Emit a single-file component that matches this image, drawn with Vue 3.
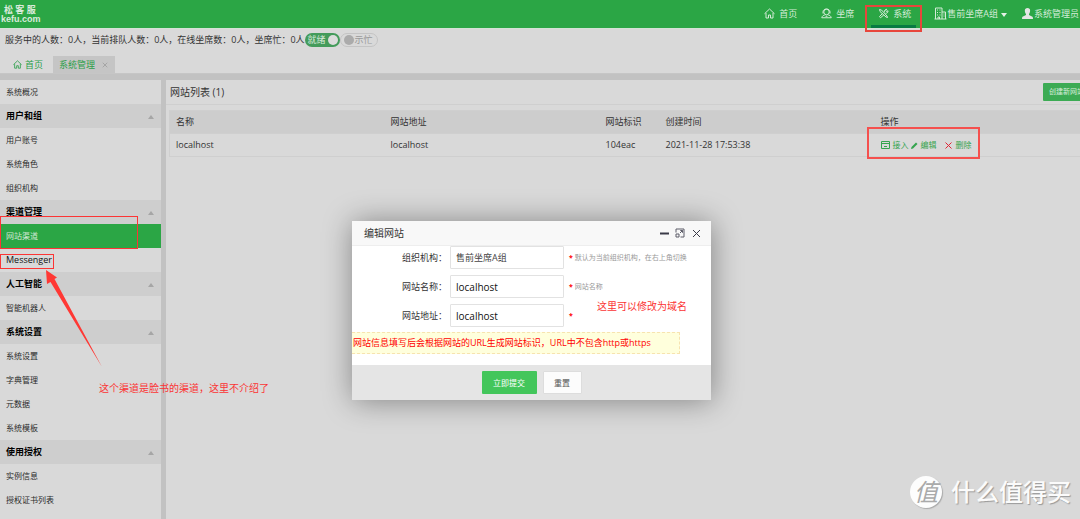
<script setup>
import { ref } from 'vue'

const groups = [
  { title: '', items: ['系统概况'] },
  { title: '用户和组', items: ['用户账号', '系统角色', '组织机构'] },
  { title: '渠道管理', items: ['网站渠道', 'Messenger'] },
  { title: '人工智能', items: ['智能机器人'] },
  { title: '系统设置', items: ['系统设置', '字典管理', '元数据', '系统模板'] },
  { title: '使用授权', items: ['实例信息', '授权证书列表'] }
]
const active = ref('网站渠道')
const org = ref('售前坐席A组')
const name = ref('localhost')
const url = ref('localhost')
</script>

<template>
  <div class="page">
    <header class="top">
      <a class="logo" href="#"><span class="logo-cn">松 客 服</span><span class="logo-en">kefu.com</span></a>
      <nav class="nav">
        <a href="#" class="nav-item">
          <svg class="ico" viewBox="0 0 22 22"><path d="M1 11.500 11 2l10 9.500M4 10v10h5v-6h4v6h5V10" /></svg>
          <span>首页</span>
        </a>
        <a href="#" class="nav-item">
          <svg class="ico" viewBox="0 0 22 22"><circle cx="11" cy="8" r="5.500" /><path d="M4 11V7.500C4.500 0 17.500 0 18 7.500V11M1.500 19.500c1-4 3.500-5 6-5.500M20.500 19.500c-1-4-3.500-5-6-5.500M1.500 19.500h19M9 16.500h4" /></svg>
          <span>坐席</span>
        </a>
        <a href="#" class="nav-item current">
          <svg class="ico" viewBox="0 0 22 22"><path d="m3 3 4 1 11 12 1 3-3-1L4 7zM13 8.500c-1-3 1-6 4.500-6L15.500 5l1.500 2 3-1.500c.5 3.500-2.500 5.500-5 5M9 11l-6 6 2 2.500L11.500 14" /></svg>
          <span>系统</span>
        </a>
        <a href="#" class="nav-org">
          <svg class="ico-org" viewBox="0 0 26 26"><path d="M3 24V2h13v22M16 10h7v14M1 24h24M6 6h2M11 6h2M6 11h2M11 11h2M6 16h2M11 16h2M8 24v-4h3v4M19 14h2M19 18h2" /></svg>
          <span>售前坐席A组</span>
          <i class="caret"></i>
        </a>
        <a href="#" class="nav-user">
          <svg class="ico-user" viewBox="0 0 22 22"><path d="M11 0c7 0 6 8 3 12v2l7 3.500q1 1 1 4.500H0q0-3.500 1-4.500L8 14v-2C5 8 4 0 11 0z" /></svg>
          <span>系统管理员</span>
        </a>
      </nav>
    </header>

    <div class="status">
      <span>服务中的人数：0人，当前排队人数：0人，在线坐席数：0人，坐席忙：0人</span>
      <button class="pill on" type="button">就绪<i class="dot"></i></button>
      <button class="pill off" type="button"><i class="dot"></i>示忙</button>
    </div>

    <div class="tabs">
      <a href="#" class="tab">
        <svg class="ico" viewBox="0 0 22 22"><path d="M1 11.500 11 2l10 9.500M4 10v10h5v-6h4v6h5V10" /></svg>首页
      </a>
      <a href="#" class="tab open">系统管理
        <svg class="tab-x" viewBox="0 0 8 8"><path d="m1 1 6 6M7 1 1 7" /></svg>
      </a>
    </div>

    <div class="body">
      <nav class="side">
        <template v-for="g in groups" :key="g.title">
          <button v-if="g.title" class="group" type="button">{{ g.title }}<i class="up"></i></button>
          <a v-for="i in g.items" :key="i" href="#" class="item" :class="{ active: i === active, plain: i === 'Messenger' }" @click.prevent="active = i">{{ i }}</a>
        </template>
      </nav>

      <main class="main">
        <div class="head">
          <h1>网站列表 (1)</h1>
          <button class="create" type="button">创建新网站</button>
        </div>
        <div class="table-wrap">
          <table>
            <colgroup><col class="c-wide"><col class="c-wide"><col class="c-id"><col class="c-wide"><col></colgroup>
            <thead>
              <tr><th>名称</th><th>网站地址</th><th>网站标识</th><th>创建时间</th><th>操作</th></tr>
            </thead>
            <tbody>
              <tr>
                <td>localhost</td><td>localhost</td><td>104eac</td><td>2021-11-28 17:53:38</td>
                <td>
                  <div class="ops">
                    <a href="#"><svg class="op-win" viewBox="0 0 9 8"><path d="M.5.5h8v7h-8zM0 2.500h9M3 5.500h3" /></svg>接入</a>
                    <a href="#"><svg class="op-pen" viewBox="0 0 14 14"><path d="m0 14 1-4L10 1l3 3-9 9z" /></svg>编辑</a>
                    <a href="#" class="del"><svg class="op-x" viewBox="0 0 14 14"><path d="m1 1 12 12M13 1 1 13" /></svg>删除</a>
                  </div>
                </td>
              </tr>
            </tbody>
          </table>
        </div>
      </main>
    </div>

    <form class="dialog" @submit.prevent>
      <div class="d-head">
        <h2>编辑网站</h2>
        <button type="button" aria-label="最小化"><svg viewBox="0 0 10 10"><path class="thick" d="M1 5.500h9" /></svg></button>
        <button type="button" aria-label="最大化"><svg class="d-max" viewBox="0 0 20 20"><path d="M2 9V2h16v16h-7M2 12h6v6H2zM10 10l5-5M10.500 5H15v4.500" /></svg></button>
        <button type="button" aria-label="关闭"><svg viewBox="0 0 10 10"><path d="m2 2 7 7M9 2 2 9" /></svg></button>
      </div>
      <div class="fields">
        <div class="field">
          <label for="org">组织机构：</label><input id="org" v-model="org" class="org">
          <span class="hint"><b>*</b> 默认为当前组织机构，在右上角切换</span>
        </div>
        <div class="field">
          <label for="name">网站名称：</label><input id="name" v-model="name">
          <span class="hint"><b>*</b> 网站名称</span>
        </div>
        <div class="field">
          <label for="url">网站地址：</label><input id="url" v-model="url">
          <span class="hint"><b>*</b></span>
        </div>
      </div>
      <p class="warn">网站信息填写后会根据网站的URL生成网站标识，URL中不包含http或https</p>
      <div class="d-foot">
        <button type="submit" class="submit">立即提交</button>
        <button type="reset" class="reset">重置</button>
      </div>
    </form>

    <i class="mark mark-nav"></i>
    <i class="mark mark-ops"></i>
    <i class="mark mark-site"></i>
    <i class="mark mark-msg"></i>
    <svg class="arrow" viewBox="0 0 58 98"><path d="M1 0 12 7.500 9.500 9 57 97 5.500 12 2 14z" /></svg>
    <span class="note note-side">这个渠道是脸书的渠道，这里不介绍了</span>
    <span class="note note-url">这里可以修改为域名</span>

    <div class="brand"><span class="brand-dot">值</span><span>什么值得买</span></div>
  </div>
</template>

<style>
body { margin: 0; background: #d9d9d9; }
</style>

<style scoped>
.page {
  position: relative;
  display: flex;
  flex-direction: column;
  min-height: 100vh;
  overflow: hidden;
  background: #d9d9d9;
  color: #333;
  font: 9px/14px "Open Sans", "Noto Sans CJK SC", sans-serif;
}
.page * { box-sizing: border-box; }
a { color: inherit; text-decoration: none; }
button, input { font: inherit; color: inherit; margin: 0; padding: 0; border: 0; background: none; }
svg { display: block; fill: none; stroke: currentColor; flex: none; }
h1, h2, p { margin: 0; font-weight: 400; }

.top {
  display: flex;
  justify-content: space-between;
  height: 28px;
  background: #2ba645;
  color: #d5ecd9;
}
.logo { display: flex; flex-direction: column; padding: 5px 0 0 1px; font-weight: 700; line-height: 9px; color: #dcebdd; }
.logo-cn { padding-left: 3px; white-space: pre; }
.logo-en { font-family: "Liberation Sans", sans-serif; line-height: 10px; }
.nav { display: flex; padding-right: 1px; }
.nav a { display: flex; align-items: center; height: 27px; white-space: nowrap; }
.nav .nav-item { position: relative; height: 28px; gap: 4px; padding: 0 12px 1px; }
.current::after { content: ""; position: absolute; left: 5px; right: 7px; bottom: 0; height: 3px; background: #087b43; }
.nav-org { margin-left: 11px; }
.ico { width: 11px; height: 11px; stroke-width: 2; }
.ico-org { width: 13px; height: 13px; stroke-width: 2; }
.caret { margin: 2px 15px 0 3px; border: 3px solid transparent; border-top: 4px solid #e3f1e5; border-bottom: 0; }
.ico-user { width: 11px; height: 11px; margin-right: 1px; fill: #e3e6e3; stroke: none; }

.status {
  display: flex;
  align-items: center;
  height: 24px;
  padding: 0 0 2px 5px;
  border-top: 1px solid #d4e3d6;
  white-space: nowrap;
}
.pill { display: flex; align-items: center; height: 14px; border-radius: 7px; line-height: 14px; }
.on { gap: 2px; padding: 0 2px 0 3px; background: #449b5b; color: #d6e8da; }
.off { gap: 1px; padding: 0 4px 0 3px; border: 1px solid #c4c4c4; color: #999; line-height: 12px; }
.dot { width: 10px; height: 10px; border-radius: 50%; background: #dcdcdc; }
.off .dot { background: #ababab; }

.tabs { display: flex; align-items: flex-end; height: 22px; padding: 4px 0 0 4px; color: #2b9f49; border-bottom: 1px solid #c6c6c6; }
.tab { display: flex; align-items: center; gap: 3px; height: 17px; padding: 0 9px; }
.tab .ico { width: 9px; height: 9px; }
.open { gap: 7px; margin-left: 1px; padding: 0 7px 0 6px; background: #c5c5c5; }
.tab-x { width: 6px; height: 6px; stroke: #999; }

.body { display: flex; flex: 1; border-top: 6px solid #c2c2c2; background: #c2c2c2; }
.side { width: 161px; flex: none; background: #d9d9d9; }
.item, .group { display: flex; align-items: center; width: 100%; height: 24px; padding: 0 7px 0 6px; text-align: left; }
.item { font-size: 8px; color: #2b2b2b; }
.plain { font-size: 9px; color: #111; }
.group { justify-content: space-between; background: #cecece; font-weight: 700; color: #000; }
.active { background: #2ba645; color: #cfe7d3; }
.up { margin-top: 2px; border: 3px solid transparent; border-bottom: 4px solid #a6a6a6; border-top: 0; }

.main { flex: 1; min-width: 0; margin-left: 5px; background: #d9d9d9; overflow: hidden; }
.head { display: flex; align-items: center; justify-content: space-between; height: 25px; padding-left: 4px; border-bottom: 1px solid #cfcfcf; }
.head h1 { font-size: 10px; }
.create { flex: none; height: 18px; margin-right: -8px; padding: 0 4px 0 6px; background: #3cab54; color: #d9eedd; font-size: 7px; border-radius: 1px; }
.table-wrap { margin: 5px 0 0 3px; }
table { width: 100%; table-layout: fixed; border-collapse: collapse; border: 1px solid #cfcfcf; border-right: 0; }
.c-wide { width: 215px; }
.c-id { width: 60px; }
th, td { height: 23px; padding: 0 6px; border-bottom: 1px solid #cfcfcf; text-align: left; font-weight: 400; }
thead { background: #cdcdcd; }
.ops { display: flex; font-size: 8px; color: #35a44e; }
.ops a { display: flex; align-items: center; gap: 3px; }
.ops .del { margin-left: 8px; gap: 4px; }
.op-win { width: 9px; height: 8px; stroke-width: 1; }
.op-pen { width: 7px; height: 7px; margin-left: 2px; fill: currentColor; stroke: none; }
.op-x { width: 7px; height: 7px; stroke: #e02535; stroke-width: 2; }

.dialog {
  position: absolute;
  left: 352px;
  top: 221px;
  width: 359px;
  background: #fff;
  box-shadow: 1px 1px 30px rgba(0, 0, 0, .4);
  border-radius: 1px;
}
.d-head { display: flex; align-items: center; gap: 6px; height: 25px; padding: 0 10px 0 12px; background: #f8f8f8; border-bottom: 1px solid #eee; }
.d-head h2 { flex: 1; font-size: 10px; }
.d-head button { color: #3a3a48; }
.d-head svg { width: 10px; height: 10px; }
.d-head .d-max { stroke-width: 2; color: #5c5c68; }
.thick { stroke-width: 2; }
.fields { display: flex; flex-direction: column; gap: 6px; }
.field { display: flex; align-items: center; }
.field label { width: 98px; padding-left: 50px; white-space: nowrap; }
.field input { width: 114px; height: 23px; padding: 0 5px; border: 1px solid #e2e2e2; border-radius: 1px; background: #fff; color: #111; font-size: 10px; }
.field .org { font-size: 9px; color: #444; }
.hint { margin-left: 5px; font-size: 7px; color: #999; white-space: nowrap; }
.hint b { font-weight: 700; color: #f00; }
.warn { width: 328px; height: 22px; margin: 5px 0 11px; padding-left: 1px; border: 1px dashed #f7e3b0; border-left: 0; background: #ffffdc; color: #f00; line-height: 20px; white-space: nowrap; }
.d-foot { display: flex; justify-content: center; gap: 6px; padding: 6px; background: #e5e5e5; }
.d-foot button { height: 23px; font-size: 8px; border-radius: 1px; }
.submit { width: 55px; background: #43c65b; color: #fff; }
.reset { width: 39px; border: 1px solid #ddd; background: #fcfcfc; color: #555; }

.mark { position: absolute; z-index: 2; border: 1px solid #fc3535; }
.mark-nav { left: 865px; top: 5px; width: 57px; height: 27px; border-width: 2px; border-color: #e8463c; }
.mark-ops { left: 867px; top: 127px; width: 113px; height: 32px; border-width: 2px; border-color: #f5504e; }
.mark-site { left: 0; top: 216px; width: 138px; height: 33px; }
.mark-msg { left: 0; top: 254px; width: 54px; height: 15px; }
.arrow { position: absolute; left: 45px; top: 270px; width: 58px; height: 98px; fill: #ff3834; stroke: none; }
.note { position: absolute; font-size: 10px; color: #fb3434; white-space: nowrap; }
.note-side { left: 99px; top: 381px; }
.note-url { left: 597px; top: 299px; }
.brand {
  position: absolute;
  right: 9px;
  bottom: 11px;
  display: flex;
  align-items: center;
  gap: 9px;
  color: #fbfbfb;
  font-size: 24px;
  font-weight: 500;
  line-height: 32px;
  text-shadow: 1px 1px 1px #999;
}
.brand-dot { width: 32px; height: 32px; border-radius: 50%; background: #fdfdfd; color: #aaa; font-style: italic; font-weight: 400; text-align: center; text-shadow: none; box-shadow: 1px 1px 1px #aaa; }
</style>
